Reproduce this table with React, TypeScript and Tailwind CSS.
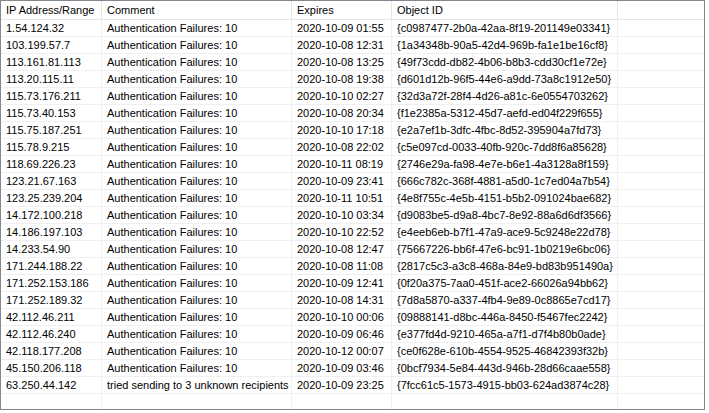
import React from 'react'

type Entry = [string, string, string, string]

const AUTH = 'Authentication Failures: 10'

const ROWS: Entry[] = [
  ['1.54.124.32', AUTH, '2020-10-09 01:55', '{c0987477-2b0a-42aa-8f19-201149e03341}'],
  ['103.199.57.7', AUTH, '2020-10-08 12:31', '{1a34348b-90a5-42d4-969b-fa1e1be16cf8}'],
  ['113.161.81.113', AUTH, '2020-10-08 13:25', '{49f73cdd-db82-4b06-b8b3-cdd30cf1e72e}'],
  ['113.20.115.11', AUTH, '2020-10-08 19:38', '{d601d12b-96f5-44e6-a9dd-73a8c1912e50}'],
  ['115.73.176.211', AUTH, '2020-10-10 02:27', '{32d3a72f-28f4-4d26-a81c-6e0554703262}'],
  ['115.73.40.153', AUTH, '2020-10-08 20:34', '{f1e2385a-5312-45d7-aefd-ed04f229f655}'],
  ['115.75.187.251', AUTH, '2020-10-10 17:18', '{e2a7ef1b-3dfc-4fbc-8d52-395904a7fd73}'],
  ['115.78.9.215', AUTH, '2020-10-08 22:02', '{c5e097cd-0033-40fb-920c-7dd8f6a85628}'],
  ['118.69.226.23', AUTH, '2020-10-11 08:19', '{2746e29a-fa98-4e7e-b6e1-4a3128a8f159}'],
  ['123.21.67.163', AUTH, '2020-10-09 23:41', '{666c782c-368f-4881-a5d0-1c7ed04a7b54}'],
  ['123.25.239.204', AUTH, '2020-10-11 10:51', '{4e8f755c-4e5b-4151-b5b2-091024bae682}'],
  ['14.172.100.218', AUTH, '2020-10-10 03:34', '{d9083be5-d9a8-4bc7-8e92-88a6d6df3566}'],
  ['14.186.197.103', AUTH, '2020-10-10 22:52', '{e4eeb6eb-b7f1-47a9-ace9-5c9248e22d78}'],
  ['14.233.54.90', AUTH, '2020-10-08 12:47', '{75667226-bb6f-47e6-bc91-1b0219e6bc06}'],
  ['171.244.188.22', AUTH, '2020-10-08 11:08', '{2817c5c3-a3c8-468a-84e9-bd83b951490a}'],
  ['171.252.153.186', AUTH, '2020-10-09 12:41', '{0f20a375-7aa0-451f-ace2-66026a94bb62}'],
  ['171.252.189.32', AUTH, '2020-10-08 14:31', '{7d8a5870-a337-4fb4-9e89-0c8865e7cd17}'],
  ['42.112.46.211', AUTH, '2020-10-10 00:06', '{09888141-d8bc-446a-8450-f5467fec2242}'],
  ['42.112.46.240', AUTH, '2020-10-09 06:46', '{e377fd4d-9210-465a-a7f1-d7f4b80b0ade}'],
  ['42.118.177.208', AUTH, '2020-10-12 00:07', '{ce0f628e-610b-4554-9525-46842393f32b}'],
  ['45.150.206.118', AUTH, '2020-10-09 03:46', '{0bcf7934-5e84-443d-946b-28d66caae558}'],
  ['63.250.44.142', 'tried sending to 3 unknown recipients', '2020-10-09 23:25', '{7fcc61c5-1573-4915-bb03-624ad3874c28}'],
]

const HEADERS = ['IP Address/Range', 'Comment', 'Expires', 'Object ID']

// column widths include the 1px right grid line
const GRID = 'grid grid-cols-[101px_190px_100px_226px_1fr]'

export default function App() {
  return (
    <div className="bg-white w-[709px] h-[413px]">
      <div
        className="w-[705px] h-[410px] border border-[#828790] bg-white flex flex-col overflow-hidden text-[11px] text-black"
        style={{ fontFamily: '"Liberation Sans", Arial, sans-serif' }}
      >
        {/* Header */}
        <div className={`${GRID} h-[19px] border-b border-[#e5e5e5] shrink-0`}>
          {HEADERS.map(h => (
            <div key={h} className="border-r border-[#e5e5e5] pl-[5px] leading-[18px] whitespace-nowrap overflow-hidden">
              {h}
            </div>
          ))}
          <div />
        </div>

        {/* Rows */}
        {ROWS.map(row => (
          <div key={row[0]} className={`${GRID} h-[17px] border-b border-[#f0f0f0] shrink-0`}>
            {row.map((cell, i) => (
              <div key={i} className="border-r border-[#f0f0f0] pl-[5px] leading-[16px] whitespace-nowrap overflow-hidden">
                {cell}
              </div>
            ))}
            <div />
          </div>
        ))}

        {/* Empty area, grid lines keep going */}
        <div className={`${GRID} flex-1`}>
          <div className="border-r border-[#f0f0f0]" />
          <div className="border-r border-[#f0f0f0]" />
          <div className="border-r border-[#f0f0f0]" />
          <div className="border-r border-[#f0f0f0]" />
          <div />
        </div>
      </div>
    </div>
  )
}
